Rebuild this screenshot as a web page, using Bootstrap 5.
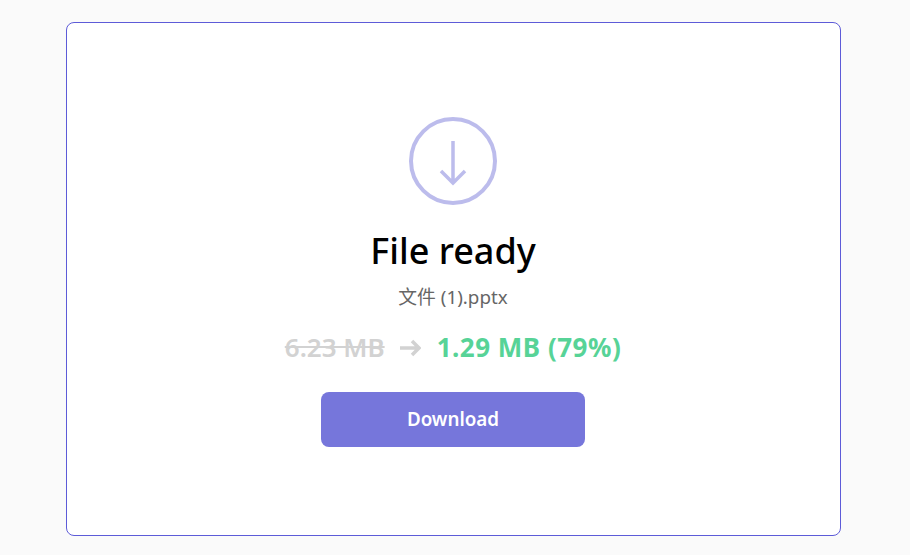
<!DOCTYPE html>
<html lang="en">

<head>
    <meta charset="utf-8" />
    <meta name="viewport" content="width=device-width, initial-scale=1" />
    <title>File ready</title>

    <link rel="stylesheet" href="https://cdn.jsdelivr.net/npm/bootstrap@5.3.2/dist/css/bootstrap.min.css">
    <style>
        body {
            background-color: #fafafa;
            font-family: "Noto Sans", "Noto Sans CJK SC", sans-serif;
            height: 555px;
            overflow: hidden;
        }

        .page-wrap {
            padding: 22px 69px 19px 66px;
            height: 555px;
        }

        .ready-panel {
            height: 514px;
            padding: 94px 1px 0 0;
            border: 1px solid #5d5bd8;
            border-radius: 8px;
            background: #fff;
        }

        .ready-icon {
            width: 88px;
            height: 88px;
            margin-bottom: 21px;
        }

        .ready-title {
            font-size: 36px;
            font-weight: 500;
            line-height: 50px;
            color: #000;
            margin-bottom: 9px;
        }

        .ready-file {
            font-size: 18.8px;
            line-height: 24px;
            color: #666;
            margin-bottom: 22px;
        }

        .size-line {
            font-size: 26px;
            font-weight: 700;
            line-height: 33px;
            margin-bottom: 28px;
        }

        .size-old {
            color: #d2d2d2;
            font-weight: 600;
            text-decoration: line-through;
        }

        .size-arrow {
            margin: 0 16px 0 15px;
        }

        .size-new {
            color: #57d397;
            letter-spacing: .5px;
        }

        .btn-download {
            width: 264px;
            height: 55px;
            font-size: 18.8px;
            font-weight: 600;
            line-height: 39px;
            color: #fff;
            background: #7676db;
            border: 0;
            border-radius: 8px;
        }
    </style>
</head>

<body>
    <div class="page-wrap">
        <div class="ready-panel d-flex flex-column align-items-center">
            <svg class="ready-icon" viewBox="0 0 88 88" fill="none" stroke="#bcbcec" aria-hidden="true">
                <circle cx="44" cy="44" r="42" stroke-width="4" />
                <path d="M44 24V66M32 54L44 66L56 54" stroke-width="3.5" />
            </svg>
            <h1 class="ready-title">File ready</h1>
            <p class="ready-file">文件 (1).pptx</p>
            <div class="size-line d-flex align-items-center">
                <span class="size-old">6.23 MB</span>
                <svg class="size-arrow" width="21" height="18" viewBox="0 0 21 18" fill="none" stroke="#d2d2d2" stroke-width="3.5" aria-hidden="true">
                    <path d="M0 9H19M12 2L19 9L12 16" />
                </svg>
                <span class="size-new">1.29 MB (79%)</span>
            </div>
            <button type="button" class="btn btn-download">Download</button>
        </div>
    </div>
    <script src="https://cdn.jsdelivr.net/npm/bootstrap@5.3.2/dist/js/bootstrap.bundle.min.js"></script>
</body>

</html>
